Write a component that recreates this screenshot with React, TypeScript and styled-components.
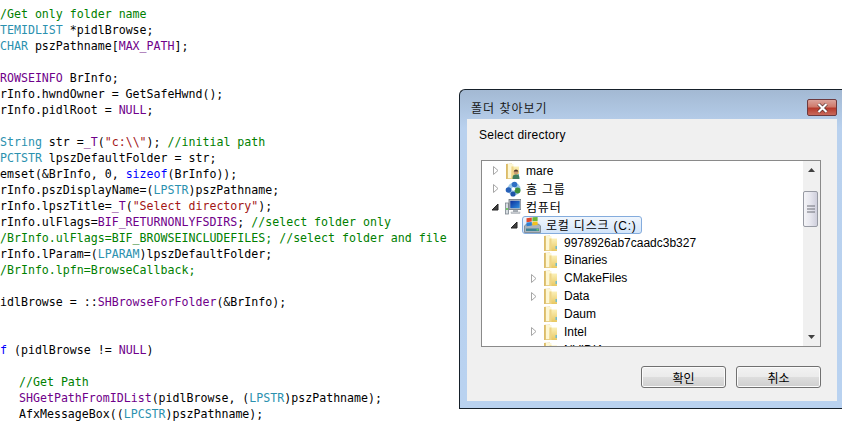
// App.tsx
import React from 'react';
import styled, { createGlobalStyle } from 'styled-components';

type TokenKind = 'plain' | 'comment' | 'type' | 'macro' | 'keyword' | 'string';
type Token = [TokenKind, string];

interface CodeRow {
  indent?: boolean;
  tokens: Token[];
}

const tokenColors: Record<TokenKind, string> = {
  plain: '#000000',
  comment: '#008000',
  type: '#2b91af',
  macro: '#6f008a',
  keyword: '#0000ff',
  string: '#a31515',
};

const codeLines: CodeRow[] = [
  { tokens: [['comment', '//Get only folder name']] },
  { tokens: [['type', 'ITEMIDLIST'], ['plain', ' *pidlBrowse;']] },
  { tokens: [['type', 'TCHAR'], ['plain', ' pszPathname['], ['macro', 'MAX_PATH'], ['plain', '];']] },
  { tokens: [] },
  { tokens: [['macro', 'BROWSEINFO'], ['plain', ' BrInfo;']] },
  { tokens: [['plain', 'BrInfo.hwndOwner = GetSafeHwnd();']] },
  { tokens: [['plain', 'BrInfo.pidlRoot = '], ['macro', 'NULL'], ['plain', ';']] },
  { tokens: [] },
  { tokens: [['type', 'CString'], ['plain', ' str ='], ['macro', '_T'], ['plain', '('], ['string', '"c:\\\\"'], ['plain', '); '], ['comment', '//initial path']] },
  { tokens: [['type', 'LPCTSTR'], ['plain', ' lpszDefaultFolder = str;']] },
  { tokens: [['plain', 'memset(&BrInfo, 0, '], ['keyword', 'sizeof'], ['plain', '(BrInfo));']] },
  { tokens: [['plain', 'BrInfo.pszDisplayName=('], ['type', 'LPSTR'], ['plain', ')pszPathname;']] },
  { tokens: [['plain', 'BrInfo.lpszTitle='], ['macro', '_T'], ['plain', '('], ['string', '"Select directory"'], ['plain', ');']] },
  { tokens: [['plain', 'BrInfo.ulFlags='], ['macro', 'BIF_RETURNONLYFSDIRS'], ['plain', '; '], ['comment', '//select folder only']] },
  { tokens: [['comment', '//BrInfo.ulFlags=BIF_BROWSEINCLUDEFILES; //select folder and file']] },
  { tokens: [['plain', 'BrInfo.lParam=('], ['type', 'LPARAM'], ['plain', ')lpszDefaultFolder;']] },
  { tokens: [['comment', '//BrInfo.lpfn=BrowseCallback;']] },
  { tokens: [] },
  { tokens: [['plain', 'pidlBrowse = ::'], ['macro', 'SHBrowseForFolder'], ['plain', '(&BrInfo);']] },
  { tokens: [] },
  { tokens: [] },
  { tokens: [['keyword', 'if'], ['plain', ' (pidlBrowse != '], ['macro', 'NULL'], ['plain', ')']] },
  { tokens: [] },
  { indent: true, tokens: [['comment', '//Get Path']] },
  { indent: true, tokens: [['macro', 'SHGetPathFromIDList'], ['plain', '(pidlBrowse, ('], ['type', 'LPSTR'], ['plain', ')pszPathname);']] },
  { indent: true, tokens: [['plain', 'AfxMessageBox(('], ['type', 'LPCSTR'], ['plain', ')pszPathname);']] },
];

type IconKind = 'user' | 'homegroup' | 'computer' | 'drive' | 'folder';
type ArrowKind = 'none' | 'closed' | 'open';

interface TreeItem {
  label: string;
  level: number;
  arrow: ArrowKind;
  icon: IconKind;
  selected?: boolean;
  korean?: boolean;
}

const treeItems: TreeItem[] = [
  { label: 'mare', level: 0, arrow: 'closed', icon: 'user' },
  { label: '홈 그룹', level: 0, arrow: 'closed', icon: 'homegroup', korean: true },
  { label: '컴퓨터', level: 0, arrow: 'open', icon: 'computer', korean: true },
  { label: '로컬 디스크 (C:)', level: 1, arrow: 'open', icon: 'drive', selected: true, korean: true },
  { label: '9978926ab7caadc3b327', level: 2, arrow: 'none', icon: 'folder' },
  { label: 'Binaries', level: 2, arrow: 'none', icon: 'folder' },
  { label: 'CMakeFiles', level: 2, arrow: 'closed', icon: 'folder' },
  { label: 'Data', level: 2, arrow: 'closed', icon: 'folder' },
  { label: 'Daum', level: 2, arrow: 'none', icon: 'folder' },
  { label: 'Intel', level: 2, arrow: 'closed', icon: 'folder' },
  { label: 'NVIDIA', level: 2, arrow: 'none', icon: 'folder' },
];

const GlobalStyle = createGlobalStyle`
  html, body {
    margin: 0;
    padding: 0;
    background: #ffffff;
  }
`;

const Page = styled.div`
  position: relative;
  width: 842px;
  height: 442px;
  overflow: hidden;
  background: #ffffff;
`;

const CodePane = styled.div`
  margin-left: -7px;
  padding-top: 6px;
  font-family: 'DejaVu Sans Mono', monospace;
  font-size: 11.6px;
  color: #000000;
`;

const CodeLine = styled.div<{ $indent?: boolean }>`
  height: 16px;
  line-height: 16px;
  white-space: pre;
  padding-left: ${(props) => (props.$indent ? '26px' : '0')};
`;

const Tok = styled.span<{ $kind: TokenKind }>`
  color: ${(props) => tokenColors[props.$kind]};
`;

const Dialog = styled.div`
  position: absolute;
  left: 459px;
  top: 89px;
  width: 383px;
  height: 320px;
  box-sizing: border-box;
  display: flex;
  flex-direction: column;
  border: 1px solid #16202a;
  border-right: none;
  border-radius: 6px 0 0 0;
  background: linear-gradient(180deg, #a3b9d3 0%, #b9d1ee 12%, #b9d2f0 100%);
  font-family: 'Liberation Sans', 'Noto Sans CJK KR', sans-serif;
  font-size: 12px;
  color: #000000;
`;

const TitleBar = styled.div`
  height: 29px;
  flex: none;
  display: flex;
  align-items: center;
  justify-content: space-between;
  padding: 6px 5px 0 11px;
  box-sizing: border-box;
`;

const TitleText = styled.span`
  font-size: 12px;
  letter-spacing: 1px;
  color: #1a1a1a;
`;

const CloseButton = styled.div`
  width: 30px;
  height: 17px;
  box-sizing: border-box;
  display: flex;
  align-items: center;
  justify-content: center;
  border: 1px solid #6d3a3e;
  border-radius: 2px;
  background: linear-gradient(180deg, #dba39b 0%, #cf7a6c 45%, #b63a2c 55%, #c86a5c 100%);
`;

const Content = styled.div`
  height: 282px;
  margin: 0 5px 0 7px;
  flex: none;
  display: flex;
  flex-direction: column;
  box-sizing: border-box;
  padding: 0 16px 0 12px;
  background: #f0f0f0;
`;

const Prompt = styled.div`
  height: 41px;
  flex: none;
  padding-top: 9px;
  box-sizing: border-box;
  line-height: 15px;
  letter-spacing: 0.25px;
`;

const TreeBox = styled.div`
  height: 187px;
  flex: none;
  margin-left: 2px;
  display: flex;
  box-sizing: border-box;
  border: 1px solid #8a8a8a;
  background: #ffffff;
`;

const Tree = styled.div`
  flex: 1;
  min-width: 0;
  overflow: hidden;
  padding-top: 1px;
`;

const TreeRow = styled.div<{ $level: number }>`
  height: 17.9px;
  display: flex;
  align-items: center;
  padding-left: ${(props) => 5 + props.$level * 19}px;
  white-space: nowrap;
`;

const ArrowSlot = styled.span`
  width: 16px;
  flex: none;
  display: flex;
  align-items: center;
  justify-content: center;
`;

const RowBody = styled.div<{ $selected?: boolean }>`
  height: 18px;
  box-sizing: border-box;
  display: flex;
  align-items: center;
  gap: 5px;
  padding: 0 4px 0 1px;
  border: 1px solid ${(props) => (props.$selected ? '#84acdd' : 'transparent')};
  border-radius: 3px;
  background: ${(props) =>
    props.$selected ? 'linear-gradient(180deg, #f0f6fd 0%, #d3e5fa 100%)' : 'transparent'};
`;

const RowLabel = styled.span<{ $korean?: boolean }>`
  letter-spacing: ${(props) => (props.$korean ? '0.8px' : '0')};
`;

const Scrollbar = styled.div`
  width: 17px;
  flex: none;
  display: flex;
  flex-direction: column;
  background: #f0f0f0;
`;

const ScrollArrow = styled.div`
  height: 18px;
  flex: none;
  display: flex;
  align-items: center;
  justify-content: center;
`;

const ScrollThumb = styled.div`
  height: 36px;
  width: 15px;
  margin-top: 12px;
  box-sizing: border-box;
  display: flex;
  align-items: center;
  justify-content: center;
  border: 1px solid #979aa3;
  border-radius: 2px;
  background: linear-gradient(90deg, #f4f4f7 0%, #e6e6ee 50%, #cfcfdc 100%);
`;

const ScrollGap = styled.div`
  flex: 1;
`;

const ButtonRow = styled.div`
  display: flex;
  justify-content: flex-end;
  gap: 10px;
  margin-top: 19px;
`;

const DialogButton = styled.div`
  width: 85px;
  height: 22px;
  box-sizing: border-box;
  display: flex;
  align-items: center;
  justify-content: center;
  border: 1px solid #707070;
  border-radius: 3px;
  background: linear-gradient(180deg, #f2f2f2 0%, #ebebeb 48%, #dddddd 52%, #cfcfcf 100%);
  box-shadow: inset 0 0 0 1px #fbfbfb;
`;

const TreeArrow: React.FC<{ kind: ArrowKind }> = ({ kind }) => {
  if (kind === 'closed') {
    return (
      <svg width="9" height="9" viewBox="0 0 9 9">
        <path d="M2.5 0.5 L7 4.5 L2.5 8.5 Z" fill="#ffffff" stroke="#a6a6a6" />
      </svg>
    );
  }
  if (kind === 'open') {
    return (
      <svg width="8" height="8" viewBox="0 0 8 8">
        <path d="M7 1 L7 7 L1 7 Z" fill="#404040" stroke="#262626" />
      </svg>
    );
  }
  return null;
};

const FolderShape: React.FC = () => (
  <>
    <path d="M1 1 L7 0.5 L7 16 L1 16 Z" fill="#e6d08c" />
    <path d="M3 1 L8.5 1 L8.5 15 L3 15 Z" fill="#fdf7d4" />
    <path d="M6.5 3.5 L14 3.5 L14 16 L6.5 16 Z" fill="url(#folderFront)" />
    <path d="M1 1 L2.6 0.8 L2.6 16 L1 16 Z" fill="#dcbc68" />
    <path d="M6.5 3.5 L8.5 3.5 L8.5 16 L6.5 16 Z" fill="#eed588" />
    <rect x="12.5" y="11" width="1.5" height="3" fill="#72bccb" />
  </>
);

const TreeIcon: React.FC<{ kind: IconKind }> = ({ kind }) => {
  if (kind === 'folder') {
    return (
      <svg width="16" height="16" viewBox="0 0 16 16">
        <FolderShape />
      </svg>
    );
  }
  if (kind === 'user') {
    return (
      <svg width="16" height="16" viewBox="0 0 16 16">
        <FolderShape />
        <circle cx="11" cy="9" r="2.4" fill="#c99a72" />
        <path d="M7.5 16 C7.5 12 9 11.5 11 11.5 C13 11.5 14.5 12 14.5 16 Z" fill="#3f7d5f" />
        <path d="M8.8 8.5 C9 6 13 6 13.2 8.5 Z" fill="#4c3a2c" />
      </svg>
    );
  }
  if (kind === 'homegroup') {
    return (
      <svg width="16" height="16" viewBox="0 0 16 16">
        <circle cx="9" cy="8" r="6.5" fill="#9cc7e8" />
        <circle cx="3.5" cy="9" r="2.8" fill="#2660b8" />
        <circle cx="9.5" cy="3.5" r="2.8" fill="#2f6fc4" />
        <circle cx="12.5" cy="9.5" r="3" fill="#3d8f3c" />
        <circle cx="8" cy="13" r="2.6" fill="#1f55a8" />
        <circle cx="8.5" cy="8" r="1.8" fill="#ffffff" />
      </svg>
    );
  }
  if (kind === 'computer') {
    return (
      <svg width="16" height="16" viewBox="0 0 16 16">
        <rect x="0.5" y="4" width="3" height="11" fill="#d8dde2" stroke="#7d8790" strokeWidth="0.8" />
        <rect x="1.2" y="9" width="1.6" height="2" fill="#58c048" />
        <rect x="4" y="0.5" width="12" height="10" fill="#b9c0c8" stroke="#6c747c" strokeWidth="0.8" />
        <rect x="5.3" y="1.8" width="9.4" height="7.4" fill="url(#screenFill)" />
        <rect x="8" y="11" width="5" height="2" fill="#a8aeb5" />
        <rect x="6" y="13" width="9" height="1.6" fill="#d4d8dc" stroke="#8a9198" strokeWidth="0.4" />
      </svg>
    );
  }
  return (
    <svg width="17" height="16" viewBox="0 0 17 16">
      <path d="M0.5 9 L2.5 7 L14.5 7 L16.5 9 L16.5 15.5 L0.5 15.5 Z" fill="#aab4bc" stroke="#6a7680" strokeWidth="0.7" />
      <rect x="2" y="11.5" width="13" height="2.5" fill="#3f8296" />
      <rect x="12.5" y="12" width="2" height="1.5" fill="#68d060" />
      <path d="M2.5 1.2 L7.8 0.4 L7.8 4.4 L2.5 5.2 Z" fill="#e0492c" />
      <path d="M8.4 0.3 L13.6 0 L13.6 4 L8.4 4.3 Z" fill="#6cb83a" />
      <path d="M2.5 5.6 L7.8 4.9 L7.8 8.6 L2.5 9.2 Z" fill="#2f7fd0" />
      <path d="M8.4 4.8 L13.6 4.4 L13.6 8 L8.4 8.5 Z" fill="#f2c21e" />
    </svg>
  );
};

const App: React.FC = () => {
  return (
    <>
      <GlobalStyle />
      <Page>
        {/* gradients shared by the tree icons */}
        <svg width="0" height="0" style={{ position: 'absolute' }}>
          <defs>
            <linearGradient id="folderFront" x1="0" y1="0" x2="0" y2="1">
              <stop offset="0" stopColor="#fbf0b8" />
              <stop offset="1" stopColor="#e8c862" />
            </linearGradient>
            <linearGradient id="screenFill" x1="0" y1="0" x2="1" y2="1">
              <stop offset="0" stopColor="#0b2f9c" />
              <stop offset="1" stopColor="#2f8fe0" />
            </linearGradient>
          </defs>
        </svg>

        <CodePane>
          {codeLines.map((line, index) => (
            <CodeLine key={index} $indent={line.indent}>
              {line.tokens.map(([kind, text], tokenIndex) => (
                <Tok key={tokenIndex} $kind={kind}>
                  {text}
                </Tok>
              ))}
            </CodeLine>
          ))}
        </CodePane>

        <Dialog>
          <TitleBar>
            <TitleText>폴더 찾아보기</TitleText>
            <CloseButton>
              <svg width="13" height="10" viewBox="0 0 13 10">
                <path d="M2.5 1 L10.5 9 M10.5 1 L2.5 9" stroke="#4a2a2a" strokeWidth="3.4" />
                <path d="M2.5 1 L10.5 9 M10.5 1 L2.5 9" stroke="#ffffff" strokeWidth="2.2" />
              </svg>
            </CloseButton>
          </TitleBar>
          <Content>
            <Prompt>Select directory</Prompt>
            <TreeBox>
              <Tree>
                {treeItems.map((item) => (
                  <TreeRow key={item.label} $level={item.level}>
                    <ArrowSlot>
                      <TreeArrow kind={item.arrow} />
                    </ArrowSlot>
                    <RowBody $selected={item.selected}>
                      <TreeIcon kind={item.icon} />
                      <RowLabel $korean={item.korean}>{item.label}</RowLabel>
                    </RowBody>
                  </TreeRow>
                ))}
              </Tree>
              <Scrollbar>
                <ScrollArrow>
                  <svg width="7" height="4" viewBox="0 0 7 4">
                    <path d="M3.5 0 L7 4 L0 4 Z" fill="#404040" />
                  </svg>
                </ScrollArrow>
                <ScrollThumb>
                  <svg width="8" height="8" viewBox="0 0 8 8">
                    <path d="M0 1 H8 M0 4 H8 M0 7 H8" stroke="#6f7078" strokeWidth="1" />
                  </svg>
                </ScrollThumb>
                <ScrollGap />
                <ScrollArrow>
                  <svg width="7" height="4" viewBox="0 0 7 4">
                    <path d="M0 0 L7 0 L3.5 4 Z" fill="#404040" />
                  </svg>
                </ScrollArrow>
              </Scrollbar>
            </TreeBox>
            <ButtonRow>
              <DialogButton>확인</DialogButton>
              <DialogButton>취소</DialogButton>
            </ButtonRow>
          </Content>
        </Dialog>
      </Page>
    </>
  );
};

export default App;
